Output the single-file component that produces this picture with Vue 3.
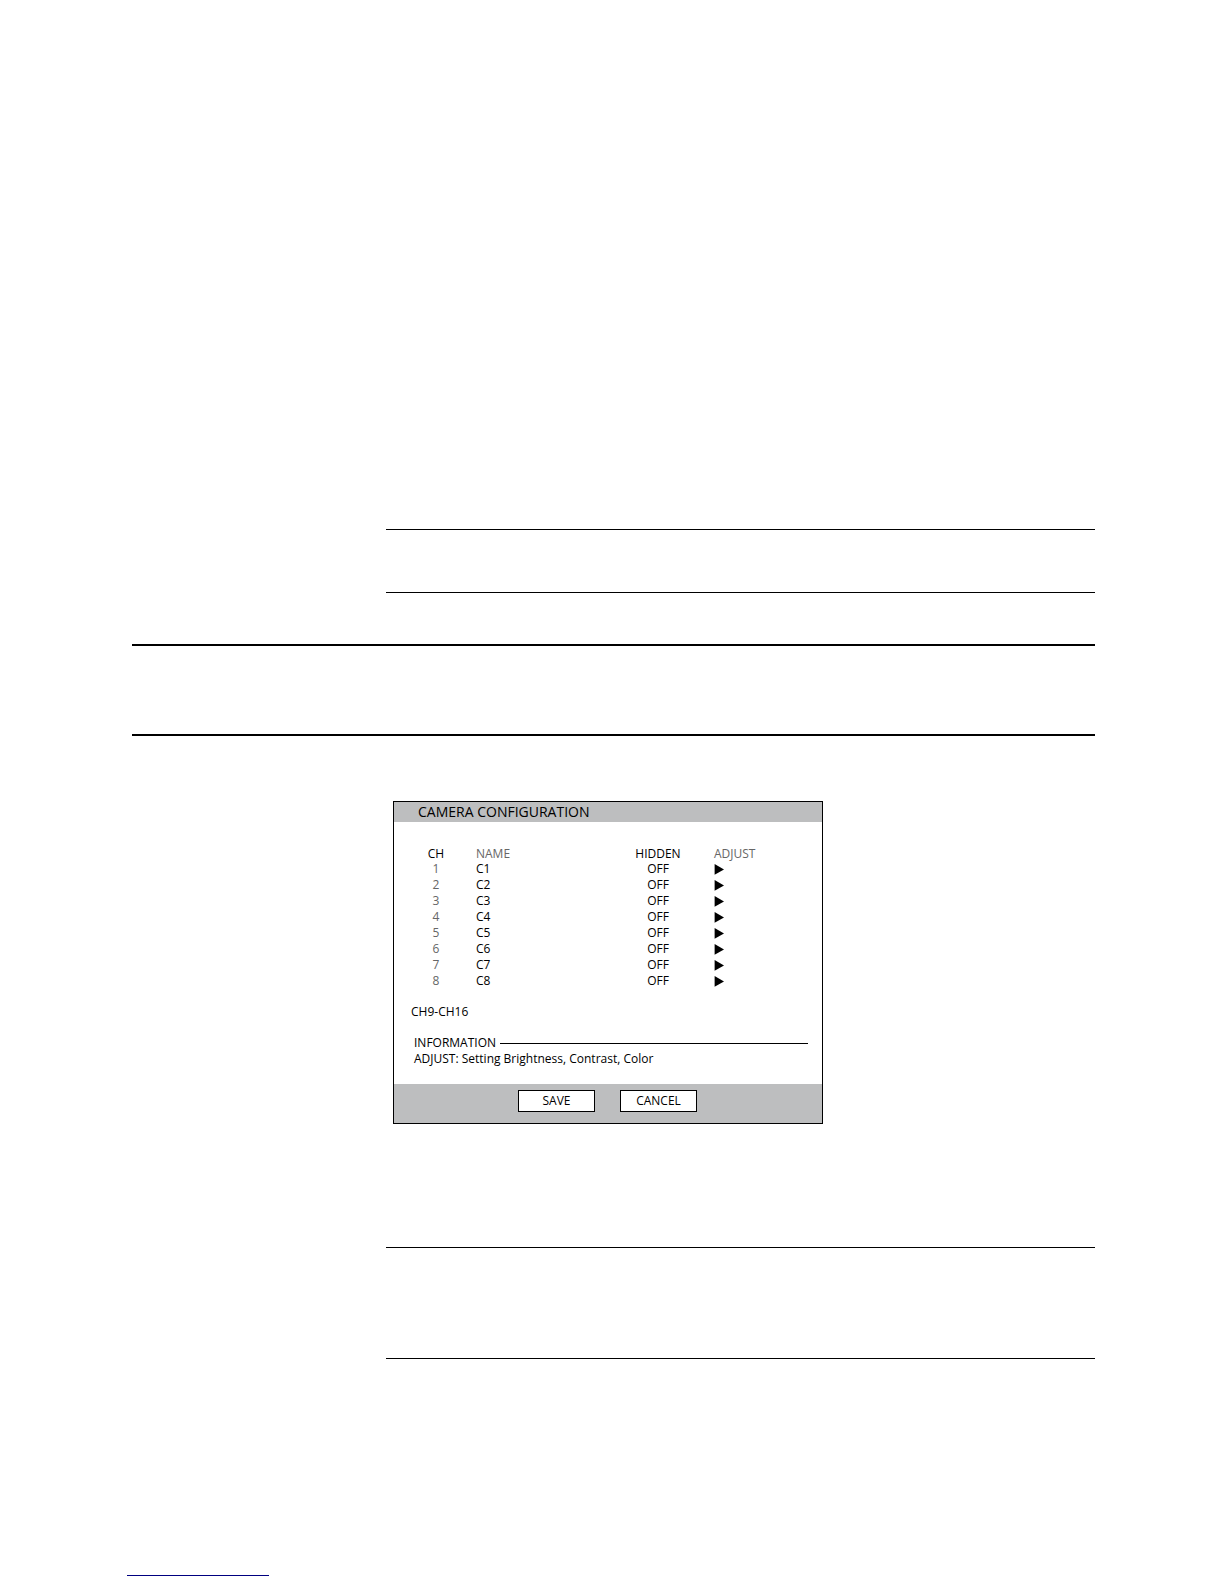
<template>
  <main class="page">
    <div class="note note-top"></div>
    <div class="section-band"></div>

    <form class="dialog" @submit.prevent="save">
      <h1 class="dialog-title">CAMERA CONFIGURATION</h1>

      <div class="dialog-body">
        <table class="cameras">
          <thead>
            <tr>
              <th class="col-ch">CH</th>
              <th class="col-name muted">NAME</th>
              <th class="col-hidden">HIDDEN</th>
              <th class="col-adjust muted">ADJUST</th>
            </tr>
          </thead>
          <tbody>
            <tr v-for="camera in cameras" :key="camera.ch">
              <td class="col-ch muted">{{ camera.ch }}</td>
              <td class="col-name">
                <input v-model="camera.name" type="text" :aria-label="'Name of channel ' + camera.ch" />
              </td>
              <td class="col-hidden">
                <button type="button" class="plain" @click="camera.hidden = !camera.hidden">
                  {{ camera.hidden ? 'ON' : 'OFF' }}
                </button>
              </td>
              <td class="col-adjust">
                <button type="button" class="plain arrow" :aria-label="'Adjust channel ' + camera.ch">
                  <svg width="10" height="11" viewBox="0 0 10 11" aria-hidden="true">
                    <path d="M0.6 0 L10 5.4 L0.6 10.8 Z" />
                  </svg>
                </button>
              </td>
            </tr>
          </tbody>
        </table>

        <button type="button" class="plain more">CH9-CH16</button>

        <section class="information">
          <h2>INFORMATION</h2>
          <p>ADJUST: Setting Brightness, Contrast, Color</p>
        </section>
      </div>

      <div class="dialog-actions">
        <button type="submit">SAVE</button>
        <button type="button" @click="reset">CANCEL</button>
      </div>
    </form>

    <div class="note note-bottom"></div>
    <div class="footer-rule"></div>
  </main>
</template>

<script setup>
import { ref } from 'vue';

const defaults = () =>
  Array.from({ length: 8 }, (_, i) => ({ ch: i + 1, name: `C${i + 1}`, hidden: false }));

const cameras = ref(defaults());
const saved = ref(defaults());

function save() {
  saved.value = cameras.value.map(camera => ({ ...camera }));
}

function reset() {
  cameras.value = saved.value.map(camera => ({ ...camera }));
}
</script>

<style>
body {
  margin: 0;
  background: #fff;
}
</style>

<style scoped>
.page {
  box-sizing: border-box;
  min-height: 100vh;
  padding: 529px 129px 8px 132px;
  font-family: "Open Sans", "Noto Sans", sans-serif;
  font-size: 12px;
  line-height: 16px;
  color: #000;
}
.note {
  margin-left: 254px;
  border-top: 1px solid #000;
  border-bottom: 1px solid #000;
}
.note-top {
  height: 62px;
}
.section-band {
  height: 88px;
  margin-top: 51px;
  border-top: 2px solid #000;
  border-bottom: 2px solid #000;
}
.dialog {
  box-sizing: border-box;
  max-width: 430px;
  margin: 65px 0 0 261px;
  border: 1px solid #000;
}
.dialog-title {
  margin: 0;
  padding-left: 24px;
  background: #bdbebf;
  font-size: 14px;
  font-weight: 400;
  line-height: 20px;
}
.dialog-body {
  padding: 24px 14px 17px 17px;
}
.cameras {
  width: 100%;
  table-layout: fixed;
  border-collapse: collapse;
}
th,
td {
  padding: 0;
  font-weight: 400;
  text-align: left;
}
th {
  height: 15px;
  line-height: 15px;
}
td {
  height: 16px;
}
.muted {
  color: #666;
}
.cameras .col-ch {
  width: 50px;
  text-align: center;
}
.cameras .col-name {
  padding-left: 15px;
}
.cameras .col-hidden {
  width: 88px;
  text-align: center;
}
.cameras .col-adjust {
  width: 94px;
  padding-left: 12px;
}
input,
button {
  font: inherit;
  color: inherit;
}
input {
  display: block;
  box-sizing: border-box;
  width: 100%;
  height: 16px;
  padding: 0;
  border: 0;
  background: none;
}
.plain {
  display: block;
  padding: 0;
  border: 0;
  background: none;
  cursor: pointer;
}
.col-hidden .plain {
  margin: 0 auto;
}
.arrow {
  display: flex;
  align-items: center;
  height: 16px;
}
.more {
  margin-top: 15px;
}
.information {
  margin: 15px 0 0 3px;
}
.information h2 {
  display: flex;
  align-items: center;
  gap: 4px;
  margin: 0;
  font-size: 12px;
  font-weight: 400;
}
.information h2::after {
  content: "";
  flex: 1;
  border-top: 1px solid #000;
}
.information p {
  margin: 0;
}
.dialog-actions {
  display: flex;
  justify-content: center;
  gap: 25px;
  padding: 6px 1px 11px 0;
  background: #bdbebf;
}
.dialog-actions button {
  width: 77px;
  height: 22px;
  padding: 0;
  border: 1px solid #000;
  background: #fff;
  line-height: 20px;
  cursor: pointer;
}
.note-bottom {
  height: 110px;
  margin-top: 123px;
}
.footer-rule {
  width: 142px;
  margin: 216px 0 0 -5px;
  border-top: 1px solid #000080;
}
</style>
